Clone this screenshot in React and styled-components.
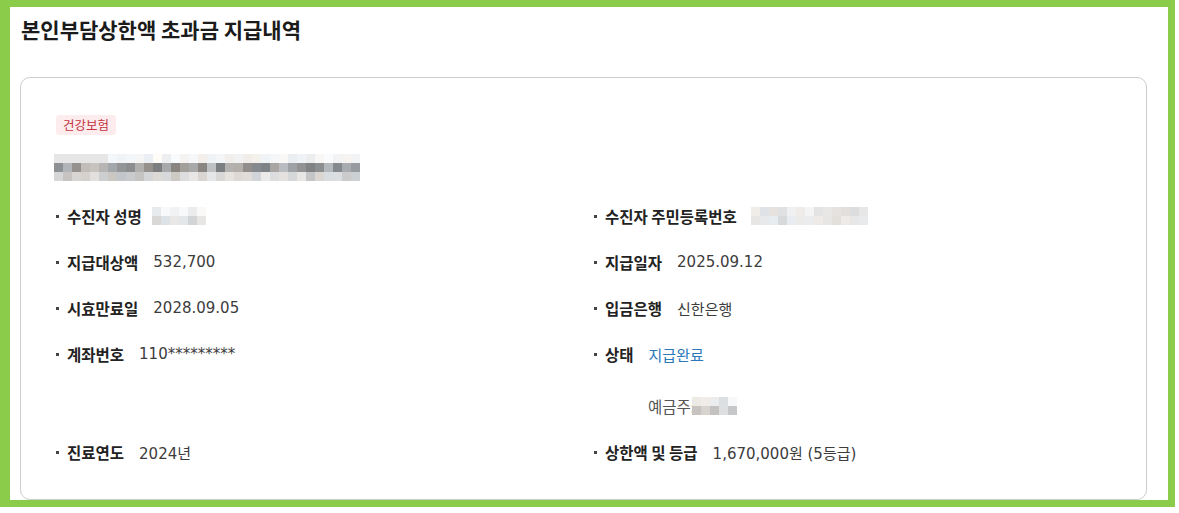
import React from 'react';
import styled, { createGlobalStyle } from 'styled-components';

const GlobalStyle = createGlobalStyle`
  body {
    margin: 0;
    background: #fff;
    font-family: "Noto Sans", "Noto Sans CJK KR", sans-serif;
  }
`;

const Frame = styled.div`
  box-sizing: border-box;
  width: 1175px;
  height: 507px;
  border: 7px solid #8bcc4a;
  border-left-width: 10px;
  padding: 9px 21px 0 10px;
  overflow: hidden;
  background: #fff;
`;

const Title = styled.h2`
  margin: 0 0 34px 1px;
  font-family: "Noto Sans CJK KR", sans-serif;
  font-size: 21px;
  line-height: 27px;
  font-weight: 700;
  color: #1b1b1b;
`;

const Card = styled.section`
  border: 1px solid #cdcdcd;
  border-radius: 10px;
  padding: 35px 35px 36px;
`;

const Badge = styled.span`
  display: inline-block;
  height: 20px;
  line-height: 20px;
  padding: 0 7px;
  border-radius: 3px;
  background: #fdeced;
  color: #c4343f;
  font-family: "Noto Sans CJK KR", sans-serif;
  font-size: 12.5px;
`;

const MosaicGrid = styled.div`
  display: ${({ $inline }) => ($inline ? 'inline-grid' : 'grid')};
  grid-template-columns: repeat(${({ $cols }) => $cols}, 9px);
  grid-auto-rows: 9px;
  margin-top: ${({ $top }) => $top || 0}px;
  margin-left: ${({ $left }) => $left || 0}px;
`;

const Cell = styled.span`
  display: block;
`;

const Details = styled.div`
  display: grid;
  grid-template-columns: 538px 1fr;
  row-gap: 24px;
  margin-top: 24px;
`;

const Field = styled.div``;

const Line = styled.div`
  display: flex;
  align-items: center;
  height: 22px;
`;

const Dot = styled.span`
  width: 3px;
  height: 3px;
  background: #444;
  margin-right: 8px;
`;

const Label = styled.span`
  font-family: "Noto Sans CJK KR", sans-serif;
  font-size: 15.5px;
  font-weight: 700;
  color: #222;
`;

const Value = styled.span`
  margin-left: 15px;
  font-family: "DejaVu Sans", "Noto Sans CJK KR", sans-serif;
  font-size: 15px;
  color: ${({ $status }) => ($status ? '#2b78bb' : '#3c3c3c')};
`;

const Sub = styled.div`
  display: flex;
  align-items: center;
  height: 22px;
  margin-top: 30px;
  padding-left: 54px;
  font-family: "Noto Sans CJK KR", sans-serif;
  font-size: 15.5px;
  color: #555;
`;

// pseudo-random grays for the blurred (masked) bits
function seeded(seed) {
  let s = seed;
  return () => {
    s = (s * 9301 + 49297) % 233280;
    return s / 233280;
  };
}

function makeRows(seed, cols, ranges) {
  const rnd = seeded(seed);
  return ranges.map(([lo, hi]) =>
    Array.from({ length: cols }, () => {
      const v = Math.round(lo + rnd() * (hi - lo));
      const t = Math.round((rnd() - 0.5) * 10);
      return `rgb(${v + t}, ${v}, ${v - t})`;
    })
  );
}

function Mosaic({ rows, inline, top, left }) {
  const cols = rows[0].length;
  return (
    <MosaicGrid $cols={cols} $inline={inline} $top={top} $left={left}>
      {rows.flat().map((c, i) => (
        <Cell key={i} style={{ background: c }} />
      ))}
    </MosaicGrid>
  );
}

const addressRows = (() => {
  const rows = makeRows(7, 34, [
    [236, 252],
    [125, 200],
    [195, 235],
  ]);
  for (let i = 0; i < 6; i += 1) rows[0][i] = '#e6e6e6';
  return rows;
})();
const nameRows = makeRows(3, 6, [
  [228, 250],
  [205, 235],
]);
const idRows = makeRows(11, 13, [
  [220, 245],
  [215, 240],
]);
const ownerRows = makeRows(5, 5, [
  [222, 248],
  [190, 232],
]);

function Item({ label, value, status, children }) {
  return (
    <Field>
      <Line>
        <Dot />
        <Label>{label}</Label>
        {value && <Value $status={status}>{value}</Value>}
        {children}
      </Line>
    </Field>
  );
}

export default function App() {
  return (
    <>
      <GlobalStyle />
      <Frame>
        <Title>본인부담상한액 초과금 지급내역</Title>
        <Card>
          <Badge>건강보험</Badge>
          <Mosaic rows={addressRows} top={19} left={-2} />
          <Details>
            <Item label="수진자 성명">
              <Mosaic rows={nameRows} inline left={10} />
            </Item>
            <Item label="수진자 주민등록번호">
              <Mosaic rows={idRows} inline left={14} />
            </Item>
            <Item label="지급대상액" value="532,700" />
            <Item label="지급일자" value="2025.09.12" />
            <Item label="시효만료일" value="2028.09.05" />
            <Item label="입금은행" value="신한은행" />
            <Item label="계좌번호" value="110*********" />
            <Field>
              <Line>
                <Dot />
                <Label>상태</Label>
                <Value $status>지급완료</Value>
              </Line>
              <Sub>
                예금주:
                <Mosaic rows={ownerRows} inline left={-3} />
              </Sub>
            </Field>
            <Item label="진료연도" value="2024년" />
            <Item label="상한액 및 등급" value="1,670,000원 (5등급)" />
          </Details>
        </Card>
      </Frame>
    </>
  );
}
